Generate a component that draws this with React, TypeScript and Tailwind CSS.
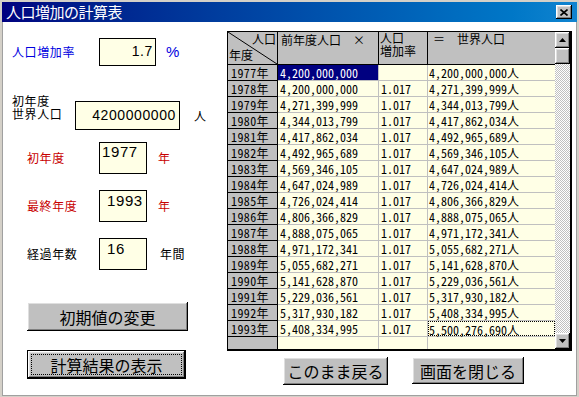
import React from "react";

// 表のデータ（年度、前年度人口、増加率、世界人口）
interface RowItem {
  year: string;
  prev: string;
  rate: string;
  result: string;
}

const rows: RowItem[] = [
  { year: "1977", prev: "4,200,000,000", rate: "", result: "4,200,000,000" },
  { year: "1978", prev: "4,200,000,000", rate: "1.017", result: "4,271,399,999" },
  { year: "1979", prev: "4,271,399,999", rate: "1.017", result: "4,344,013,799" },
  { year: "1980", prev: "4,344,013,799", rate: "1.017", result: "4,417,862,034" },
  { year: "1981", prev: "4,417,862,034", rate: "1.017", result: "4,492,965,689" },
  { year: "1982", prev: "4,492,965,689", rate: "1.017", result: "4,569,346,105" },
  { year: "1983", prev: "4,569,346,105", rate: "1.017", result: "4,647,024,989" },
  { year: "1984", prev: "4,647,024,989", rate: "1.017", result: "4,726,024,414" },
  { year: "1985", prev: "4,726,024,414", rate: "1.017", result: "4,806,366,829" },
  { year: "1986", prev: "4,806,366,829", rate: "1.017", result: "4,888,075,065" },
  { year: "1987", prev: "4,888,075,065", rate: "1.017", result: "4,971,172,341" },
  { year: "1988", prev: "4,971,172,341", rate: "1.017", result: "5,055,682,271" },
  { year: "1989", prev: "5,055,682,271", rate: "1.017", result: "5,141,628,870" },
  { year: "1990", prev: "5,141,628,870", rate: "1.017", result: "5,229,036,561" },
  { year: "1991", prev: "5,229,036,561", rate: "1.017", result: "5,317,930,182" },
  { year: "1992", prev: "5,317,930,182", rate: "1.017", result: "5,408,334,995" },
  { year: "1993", prev: "5,408,334,995", rate: "1.017", result: "5,500,276,690" },
];

const cjk = "font-['Noto_Sans_CJK_JP',sans-serif]";
const mono = "font-['Noto_Sans_Mono_CJK_JP','DejaVu_Sans_Mono',monospace]";
const bevel =
  "bg-[#c0c0c0] shadow-[inset_-1px_-1px_#000000,inset_1px_1px_#ffffff,inset_-2px_-2px_#808080,inset_2px_2px_#dfdfdf]";

const Field: React.FC<{ value: string; className: string }> = ({ value, className }) => (
  <div
    className={`bg-[#ffffe6] border border-black text-black text-[14px] font-['Liberation_Sans',sans-serif] ${className}`}
  >
    {value}
  </div>
);

const Arrow: React.FC<{ up?: boolean }> = ({ up }) => (
  <div className={`${bevel} h-[16px] flex items-center justify-center`}>
    <svg width="7" height="4" viewBox="0 0 7 4">
      {up ? <polygon points="3.5,0 7,4 0,4" fill="#000" /> : <polygon points="0,0 7,0 3.5,4" fill="#000" />}
    </svg>
  </div>
);

const Grid: React.FC = () => (
  <div className="w-[345px] h-[320px] border-l border-t border-r-2 border-b-2 border-black flex bg-[#ffffe6]">
    <div className="flex-1 flex flex-col">
      {/* ヘッダー */}
      <div className={`h-[33px] flex border-b border-black bg-[#c0c0c0] text-[12px] leading-[12px] text-black ${cjk}`}>
        <div className="relative w-[50px] border-r border-black flex flex-col justify-between pt-[1px] pb-[3px] px-[1px]">
          <svg className="absolute inset-0" width="49" height="32" viewBox="0 0 49 32">
            <line x1="0" y1="0" x2="49" y2="32" stroke="#000" strokeWidth="1" />
          </svg>
          <div className="text-right">人口</div>
          <div className="text-left">年度</div>
        </div>
        <div className="w-[101px] border-r border-black pl-[3px] pt-[2px]">前年度人口　×</div>
        <div className="w-[49px] border-r border-black pl-[1px] flex flex-col gap-[1px]">
          <div className="h-[12px]">人口</div>
          <div className="h-[12px]">増加率</div>
        </div>
        <div className="w-[127px] pl-[5px] pt-[1px]">＝　世界人口</div>
      </div>

      {rows.map((r, i) => (
        <div key={r.year} className={`h-[16px] flex border-b text-[12px] leading-[15px] ${mono}`}>
          <div className="w-[50px] bg-[#c0c0c0] border-r border-b border-black pl-[3px] -mb-[1px] tracking-[0.4px]">
            {r.year}年
          </div>
          <div
            className={`w-[101px] border-r border-b border-[#c0c0c0] pl-[2px] -mb-[1px] ${
              i === 0 ? "bg-[#000080] text-white" : "text-black"
            }`}
          >
            {r.prev}
          </div>
          <div className="w-[49px] border-r border-b border-[#c0c0c0] pl-[2px] -mb-[1px] text-black">{r.rate}</div>
          <div className="w-[127px] border-b border-[#c0c0c0] -mb-[1px] text-black">
            {i === rows.length - 1 ? (
              <div className="h-full border border-dotted border-black">{r.result}人</div>
            ) : (
              <div className="pl-[1px]">{r.result}人</div>
            )}
          </div>
        </div>
      ))}
      <div className="flex-1 flex">
        <div className="w-[50px] bg-[#c0c0c0] border-r border-black" />
        <div className="w-[101px] border-r border-[#c0c0c0]" />
        <div className="w-[49px] border-r border-[#c0c0c0]" />
        <div className="w-[127px]" />
      </div>
    </div>

    {/* スクロールバー */}
    <div className="w-[15px] flex flex-col">
      <Arrow up />
      <div className={`${bevel} h-[16px]`} />
      <div className="flex-1 bg-[image:repeating-conic-gradient(#c0c0c0_0%_25%,#ffffff_0%_50%)] bg-[length:2px_2px]" />
      <Arrow />
    </div>
  </div>
);

const App: React.FC = () => {
  return (
    <div className="w-[579px] h-[397px] bg-[#d4d0c8] pt-[2px] px-[2px] pb-[1px] flex flex-col overflow-hidden">
      {/* タイトルバー */}
      <div className="h-[20px] bg-gradient-to-r from-[#000080] to-[#1084d0] flex items-center justify-between pl-[4px] pr-[5px]">
        <span className={`text-white text-[15px] leading-[16px] tracking-[-0.5px] ${cjk}`}>人口増加の計算表</span>
        <div className={`${bevel} w-[16px] h-[14px] flex items-center justify-center`}>
          <svg width="8" height="7" viewBox="0 0 8 7">
            <path d="M0.5 0.5 L7.5 6.5 M7.5 0.5 L0.5 6.5" stroke="#000" strokeWidth="1.6" />
          </svg>
        </div>
      </div>

      <div className="flex-1 bg-white border-l border-r border-b border-[#a0a0a0] flex">
        {/* 左側の入力欄 */}
        <div className={`w-[224px] flex flex-col text-[12px] leading-[12px] tracking-[0.6px] ${cjk}`}>
          <div className="mt-[16px] flex items-center pl-[9px]">
            <div className="w-[87px] text-[#0000e0]">人口増加率</div>
            <Field value="1.7" className="w-[57px] h-[28px] flex items-center justify-end pr-[2px] pb-[3px]" />
            <span className="ml-[10px] text-[#0000e0] text-[15px] font-['Liberation_Sans',sans-serif]">%</span>
          </div>

          <div className="mt-[29px] flex items-start pl-[9px]">
            <div className="w-[63px] text-black flex flex-col gap-[1px]">
              <div className="h-[12px]">初年度</div>
              <div className="h-[12px]">世界人口</div>
            </div>
            <Field
              value="4200000000"
              className="mt-[6px] w-[105px] h-[29px] flex items-center justify-end pr-[3px] pb-[2px]"
            />
            <span className="ml-[14px] mt-[15px] text-black">人</span>
          </div>

          <div className="mt-[12px] flex items-center pl-[24px]">
            <div className="w-[72px] text-[#c80000]">初年度</div>
            <Field value="1977" className="w-[48px] h-[32px] pl-[2px] pt-[1px] leading-[16px] text-[15px]" />
            <span className="ml-[11px] text-[#c80000]">年</span>
          </div>

          <div className="mt-[16px] flex items-center pl-[24px]">
            <div className="w-[72px] text-[#c80000]">最終年度</div>
            <Field value="1993" className="w-[48px] h-[32px] pl-[7px] pt-[2px] leading-[16px] text-[15px]" />
            <span className="ml-[11px] text-[#c80000]">年</span>
          </div>

          <div className="mt-[16px] flex items-center pl-[24px]">
            <div className="w-[72px] text-black">経過年数</div>
            <Field value="16" className="w-[48px] h-[32px] pl-[7px] pt-[2px] leading-[16px] text-[15px]" />
            <span className="ml-[13px] text-black">年間</span>
          </div>

          <div
            className={`${bevel} mt-[32px] ml-[24px] w-[161px] h-[29px] flex items-center justify-center text-[16px] leading-[18px] tracking-normal text-black`}
          >
            初期値の変更
          </div>

          <div className="mt-[19px] ml-[24px] w-[159px] h-[29px] border border-black">
            <div className={`${bevel} h-full p-[3px]`}>
              <div className="h-full border border-dotted border-black flex items-center justify-center text-[16px] leading-[18px] tracking-normal text-black">
                計算結果の表示
              </div>
            </div>
          </div>
        </div>

        {/* 右側の表 */}
        <div className="flex flex-col pt-[9px]">
          <Grid />
          <div className={`mt-[6px] flex text-[16px] leading-[18px] text-black ${cjk}`}>
            <div className={`${bevel} ml-[56px] w-[105px] h-[28px] flex items-center justify-center`}>このまま戻る</div>
            <div className={`${bevel} ml-[24px] w-[112px] h-[27px] flex items-center justify-center`}>画面を閉じる</div>
          </div>
        </div>
      </div>
    </div>
  );
};

export default App;
